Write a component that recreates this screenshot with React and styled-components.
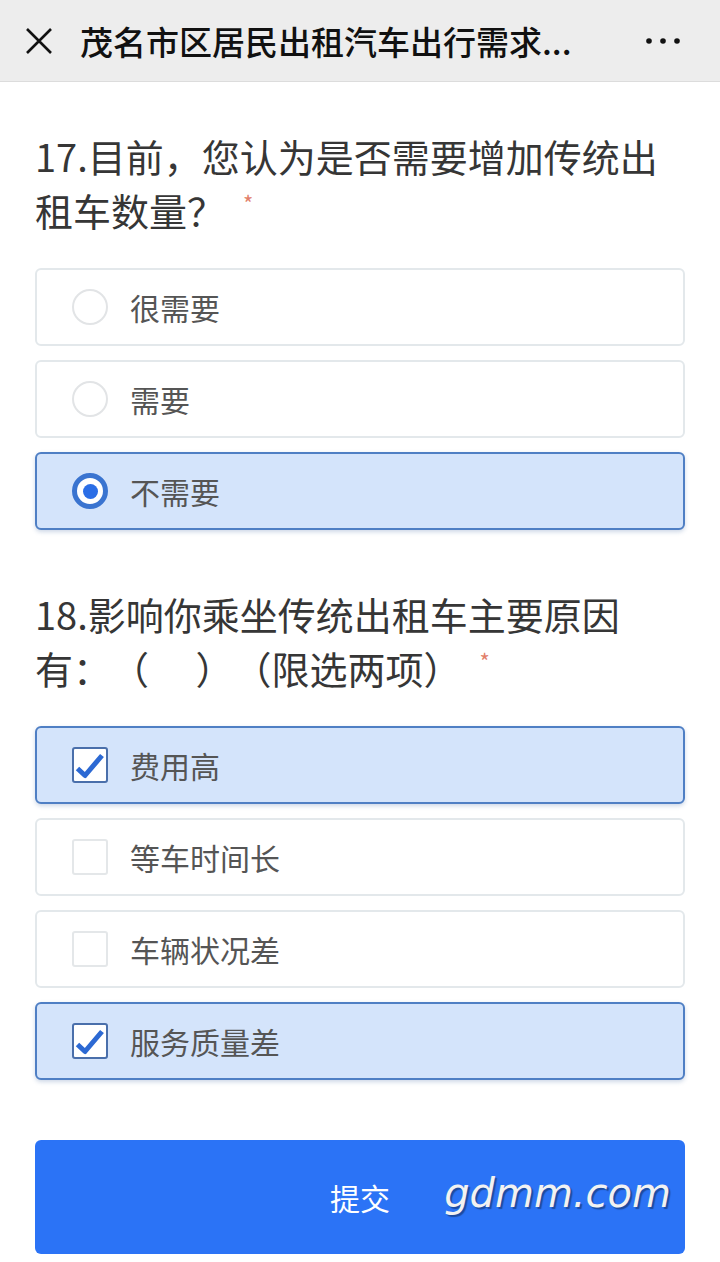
import React from "react";
import styled, { createGlobalStyle } from "styled-components";

const GlobalStyle = createGlobalStyle`
  html, body {
    margin: 0;
    padding: 0;
    background: #ffffff;
  }
  body {
    font-family: "Noto Sans CJK SC", "Noto Sans", sans-serif;
    text-spacing-trim: space-all;
  }
  * {
    box-sizing: border-box;
  }
`;

const q17 = [
  { label: "很需要", checked: false },
  { label: "需要", checked: false },
  { label: "不需要", checked: true },
];

const q18 = [
  { label: "费用高", checked: true },
  { label: "等车时间长", checked: false },
  { label: "车辆状况差", checked: false },
  { label: "服务质量差", checked: true },
];

const CloseIcon = () => (
  <svg width="30" height="30" viewBox="0 0 30 30">
    <path d="M3 3 L27 27 M27 3 L3 27" stroke="#111" strokeWidth="2.6" fill="none" />
  </svg>
);

const MoreIcon = () => (
  <svg width="38" height="10" viewBox="0 0 38 10">
    <circle cx="5" cy="5" r="2.8" fill="#111" />
    <circle cx="19" cy="5" r="2.8" fill="#111" />
    <circle cx="33" cy="5" r="2.8" fill="#111" />
  </svg>
);

// check drawn inside the 32px inner area of the box
const CheckMark = () => (
  <svg width="32" height="32" viewBox="0 0 32 32">
    <path d="M3.5 19.5 L11 26.5 L28 6.5" stroke="#2c69d3" strokeWidth="5" fill="none" strokeLinejoin="round" />
  </svg>
);

const Option = ({ label, checked, type }) => (
  <OptionRow $checked={checked}>
    {type === "radio" ? (
      <Radio $checked={checked}>{checked && <RadioDot />}</Radio>
    ) : (
      <Box $checked={checked}>{checked && <CheckMark />}</Box>
    )}
    <OptionText>{label}</OptionText>
  </OptionRow>
);

const App = () => {
  return (
    <>
      <GlobalStyle />
      <Header>
        <CloseIcon />
        <HeaderTitle>茂名市区居民出租汽车出行需求...</HeaderTitle>
        <MoreIcon />
      </Header>
      <Content>
        <Question>
          <QuestionTitle>
            17.目前，您认为是否需要增加传统出租车数量？<Star>*</Star>
          </QuestionTitle>
          <OptionList>
            {q17.map((o) => (
              <Option key={o.label} type="radio" {...o} />
            ))}
          </OptionList>
        </Question>
        <Question>
          <QuestionTitle>
            18.影响你乘坐传统出租车主要原因有：（　 ）（限选两项）<Star>*</Star>
          </QuestionTitle>
          <OptionList>
            {q18.map((o) => (
              <Option key={o.label} type="checkbox" {...o} />
            ))}
          </OptionList>
        </Question>
        <SubmitButton>
          提交
          <Watermark>gdmm.com</Watermark>
        </SubmitButton>
      </Content>
    </>
  );
};
export default App;

const Header = styled.div`
  height: 82px;
  background: #ededed;
  border-bottom: 1px solid #dcdcdc;
  display: flex;
  align-items: center;
  padding: 0 38px 0 24px;
`;

const HeaderTitle = styled.div`
  flex: 1;
  margin-left: 26px;
  font-size: 33px;
  font-weight: 500;
  color: #111;
  white-space: nowrap;
  overflow: hidden;
`;

const Content = styled.div`
  padding: 47px 35px 20px;
`;

const Question = styled.div`
  margin-bottom: 57px;
`;

const QuestionTitle = styled.div`
  font-size: 38px;
  line-height: 54px;
  color: #363636;
  margin-bottom: 31px;
  padding-right: 10px;
`;

const Star = styled.span`
  color: #e2806a;
  font-size: 22px;
  line-height: 1;
  vertical-align: top;
  position: relative;
  top: 8px;
  margin-left: 18px;
`;

const OptionList = styled.div`
  display: flex;
  flex-direction: column;
  gap: 14px;
`;

const OptionRow = styled.div`
  height: 78px;
  display: flex;
  align-items: center;
  padding-left: 35px;
  border-radius: 6px;
  border: 2px solid ${(p) => (p.$checked ? "#4f7fc4" : "#e3e8eb")};
  background: ${(p) => (p.$checked ? "#d4e4fb" : "#ffffff")};
  box-shadow: ${(p) => (p.$checked ? "0 2px 4px rgba(60, 100, 160, 0.25)" : "none")};
`;

const Radio = styled.div`
  width: 36px;
  height: 36px;
  border-radius: 50%;
  border: ${(p) => (p.$checked ? "5px solid #3a74d0" : "2px solid #e2e4e6")};
  background: #fff;
  display: flex;
  align-items: center;
  justify-content: center;
  flex-shrink: 0;
`;

const RadioDot = styled.div`
  width: 15px;
  height: 15px;
  border-radius: 50%;
  background: #2b6ee6;
`;

const Box = styled.div`
  width: 36px;
  height: 36px;
  border-radius: 3px;
  border: 2px solid ${(p) => (p.$checked ? "#4a6fab" : "#e4e7e9")};
  background: #fff;
  display: flex;
  align-items: center;
  justify-content: center;
  flex-shrink: 0;
`;

const OptionText = styled.div`
  margin-left: 22px;
  font-size: 30px;
  color: #555;
`;

const SubmitButton = styled.div`
  position: relative;
  margin-top: 60px;
  height: 114px;
  border-radius: 6px;
  background: #2b73f6;
  display: flex;
  align-items: center;
  justify-content: center;
  color: #fff;
  font-size: 30px;
`;

const Watermark = styled.span`
  position: absolute;
  right: 14px;
  top: 30px;
  font-family: "DejaVu Sans", "Open Sans", sans-serif;
  font-style: italic;
  font-size: 40px;
  color: #f2f2f2;
  text-shadow: 2px 2px 1px rgba(0, 0, 0, 0.35);
`;
